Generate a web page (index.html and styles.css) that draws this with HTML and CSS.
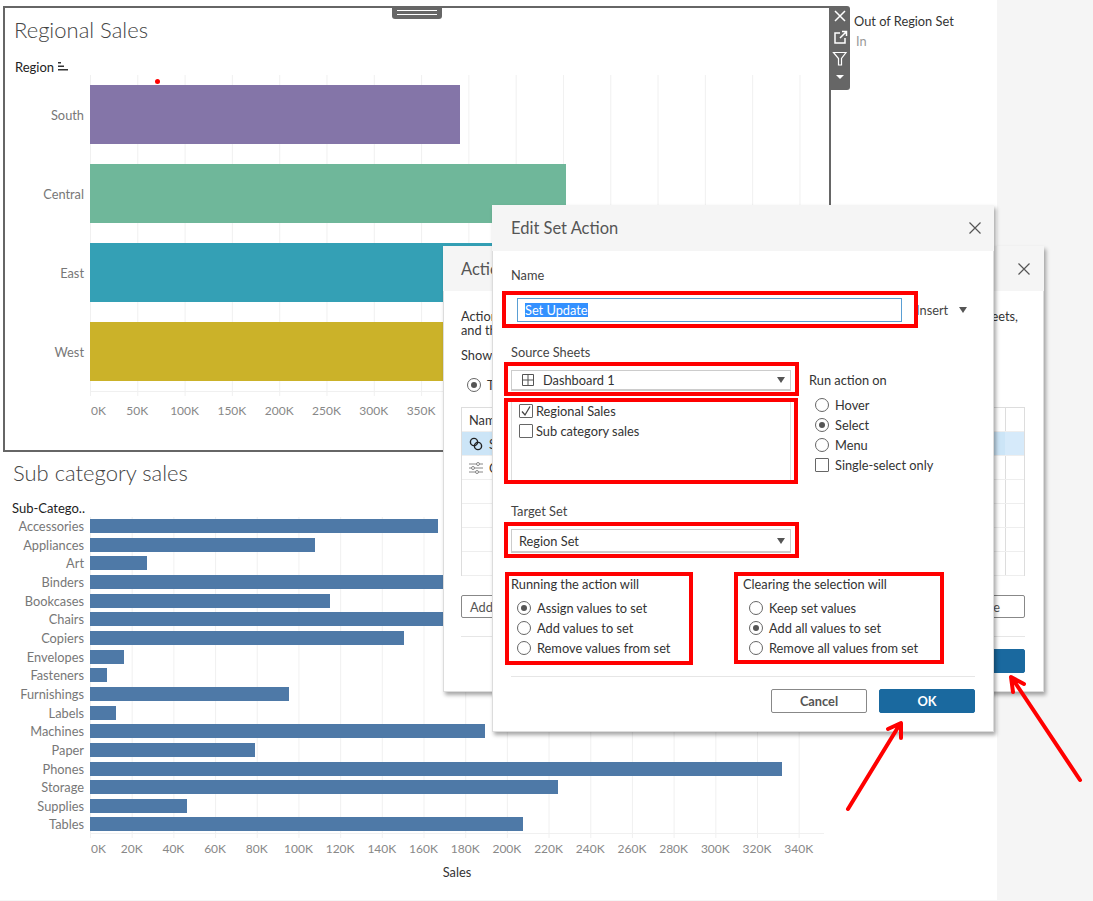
FILE: index.html
```html
<!DOCTYPE html>
<html lang="en">
<head>
<meta charset="utf-8">
<title>Edit Set Action</title>
<link rel="stylesheet" href="styles.css">
</head>
<body>
<main class="page">
  <div class="top-row">
    <section class="regional">
      <h2 class="view-title">Regional Sales</h2>
      <div class="field-head">Region
        <svg class="sort-icon" width="11" height="10" viewBox="0 0 11 10"><path d="M0 1h3v1.500H0zM0 4.500h6V6H0zM0 8h10v1.500H0z" fill="#333"/></svg>
      </div>
      <div class="big-row"><div class="row-label">South</div><div class="track track-big"><div class="big-bar south" style="width:370px"></div></div></div>
      <div class="big-row"><div class="row-label">Central</div><div class="track track-big"><div class="big-bar central" style="width:476px"></div></div></div>
      <div class="big-row"><div class="row-label">East</div><div class="track track-big"><div class="big-bar east" style="width:500px"></div></div></div>
      <div class="big-row"><div class="row-label">West</div><div class="track track-big"><div class="big-bar west" style="width:500px"></div></div></div>
      <div class="axis-block">
        <div class="ticks track-big"></div>
        <div class="axis-labels axis-big">
          <span>0K</span><span>50K</span><span>100K</span><span>150K</span><span>200K</span><span>250K</span><span>300K</span><span>350K</span>
        </div>
      </div>
      <span class="red-dot"></span>
      <div class="grip"><span></span><span></span></div>
      <div class="toolbar">
        <svg width="16" height="16" viewBox="0 0 16 16"><path d="M3 3l10 10M13 3L3 13" stroke="#fff" stroke-width="1.500" fill="none"/></svg>
        <svg width="16" height="16" viewBox="0 0 16 16"><path d="M8 4H3v10h10V9M8 9l6-6M10 2.500h4.500V7" stroke="#fff" stroke-width="1.500" fill="none"/></svg>
        <svg width="16" height="16" viewBox="0 0 16 16"><path d="M1.500 2.500h12.500L9.500 8.500V15h-3V8.500z" stroke="#fff" stroke-width="1.200" fill="none"/></svg>
        <svg width="16" height="12" viewBox="0 0 16 12"><path d="M4 4h8L8 8z" fill="#fff"/></svg>
      </div>
    </section>
    <aside class="legend">
      <div class="legend-title">Out of Region Set</div>
      <div class="legend-item">In</div>
    </aside>
  </div>

  <section class="subcat">
    <h2 class="view-title sub-title">Sub category sales</h2>
    <div class="field-head sub-head">Sub-Catego..</div>
    <div class="sub-rows">
      <div class="sub-row"><div class="row-label">Accessories</div><div class="track track-small"><div class="small-bar" style="width:348px"></div></div></div>
      <div class="sub-row"><div class="row-label">Appliances</div><div class="track track-small"><div class="small-bar" style="width:225px"></div></div></div>
      <div class="sub-row"><div class="row-label">Art</div><div class="track track-small"><div class="small-bar" style="width:57px"></div></div></div>
      <div class="sub-row"><div class="row-label">Binders</div><div class="track track-small"><div class="small-bar" style="width:424px"></div></div></div>
      <div class="sub-row"><div class="row-label">Bookcases</div><div class="track track-small"><div class="small-bar" style="width:240px"></div></div></div>
      <div class="sub-row"><div class="row-label">Chairs</div><div class="track track-small"><div class="small-bar" style="width:684px"></div></div></div>
      <div class="sub-row"><div class="row-label">Copiers</div><div class="track track-small"><div class="small-bar" style="width:314px"></div></div></div>
      <div class="sub-row"><div class="row-label">Envelopes</div><div class="track track-small"><div class="small-bar" style="width:34px"></div></div></div>
      <div class="sub-row"><div class="row-label">Fasteners</div><div class="track track-small"><div class="small-bar" style="width:17px"></div></div></div>
      <div class="sub-row"><div class="row-label">Furnishings</div><div class="track track-small"><div class="small-bar" style="width:199px"></div></div></div>
      <div class="sub-row"><div class="row-label">Labels</div><div class="track track-small"><div class="small-bar" style="width:26px"></div></div></div>
      <div class="sub-row"><div class="row-label">Machines</div><div class="track track-small"><div class="small-bar" style="width:395px"></div></div></div>
      <div class="sub-row"><div class="row-label">Paper</div><div class="track track-small"><div class="small-bar" style="width:165px"></div></div></div>
      <div class="sub-row"><div class="row-label">Phones</div><div class="track track-small"><div class="small-bar" style="width:692px"></div></div></div>
      <div class="sub-row"><div class="row-label">Storage</div><div class="track track-small"><div class="small-bar" style="width:468px"></div></div></div>
      <div class="sub-row"><div class="row-label">Supplies</div><div class="track track-small"><div class="small-bar" style="width:97px"></div></div></div>
      <div class="sub-row"><div class="row-label">Tables</div><div class="track track-small"><div class="small-bar" style="width:433px"></div></div></div>
    </div>
    <div class="axis-block sub-axis">
      <div class="ticks track-small"></div>
      <div class="axis-labels axis-small">
        <span>0K</span><span>20K</span><span>40K</span><span>60K</span><span>80K</span><span>100K</span><span>120K</span><span>140K</span><span>160K</span><span>180K</span><span>200K</span><span>220K</span><span>240K</span><span>260K</span><span>280K</span><span>300K</span><span>320K</span><span>340K</span>
      </div>
      <div class="axis-title">Sales</div>
    </div>
  </section>
</main>

<div class="dialog actions-dialog">
  <header class="dialog-head actions-head">
    <span>Actions</span>
    <svg class="close" width="14" height="14" viewBox="0 0 14 14"><path d="M1.500 1.500l11 11M12.500 1.500l-11 11" stroke="#555" stroke-width="1.200" fill="none"/></svg>
  </header>
  <div class="actions-body">
    <div class="intro"><span>Actions</span><span>sheets,</span></div>
    <div class="intro-2">and the</div>
    <div class="show-label">Show</div>
    <div class="option show-option"><span class="radio on"></span>T</div>
    <div class="action-table">
      <div class="t-row t-head"><div class="t-main">Name</div><div class="t-end"></div></div>
      <div class="t-row t-sel"><div class="t-main"><svg width="14" height="14" viewBox="0 0 14 14"><circle cx="5" cy="5" r="3.600" fill="none" stroke="#222" stroke-width="1.400"/><circle cx="9" cy="9" r="3.600" fill="none" stroke="#222" stroke-width="1.400"/></svg>S</div><div class="t-end"></div></div>
      <div class="t-row"><div class="t-main"><svg width="14" height="14" viewBox="0 0 14 14"><path d="M0 3h14M0 7h14M0 11h14" stroke="#888"/><circle cx="9" cy="3" r="1.500" fill="#fff" stroke="#888"/><circle cx="4" cy="7" r="1.500" fill="#fff" stroke="#888"/><circle cx="8" cy="11" r="1.500" fill="#fff" stroke="#888"/></svg>C</div><div class="t-end"></div></div>
      <div class="t-row"><div class="t-main"></div><div class="t-end"></div></div>
      <div class="t-row"><div class="t-main"></div><div class="t-end"></div></div>
      <div class="t-row"><div class="t-main"></div><div class="t-end"></div></div>
      <div class="t-row"><div class="t-main"></div><div class="t-end"></div></div>
    </div>
    <div class="table-btns"><button class="btn add-btn">Add</button><button class="btn remove-btn">Remove</button></div>
    <hr class="rule actions-rule">
    <div class="actions-foot"><button class="btn btn-blue">OK</button></div>
  </div>
</div>

<div class="dialog edit-dialog">
  <header class="dialog-head">
    <span>Edit Set Action</span>
    <svg class="close" width="14" height="14" viewBox="0 0 14 14"><path d="M1.500 1.500l11 11M12.500 1.500l-11 11" stroke="#555" stroke-width="1.200" fill="none"/></svg>
  </header>
  <div class="edit-body">
    <div class="label name-label">Name</div>
    <div class="name-row">
      <div class="name-input"><span class="selected">Set Update</span></div>
      <span class="insert">Insert</span><span class="caret insert-caret"></span>
    </div>
    <div class="label source-label">Source Sheets</div>
    <div class="source-cols">
      <div class="source-left">
        <div class="select">
          <svg class="grid-icon" width="12" height="12" viewBox="0 0 12 12"><path d="M.5.500h11v11H.500zM6 .500v11M.5 6h11" fill="none" stroke="#555"/></svg>
          <span>Dashboard 1</span><span class="caret"></span>
        </div>
        <div class="sheet-list">
          <div class="sheet-item"><span class="check"><svg width="12" height="12" viewBox="0 0 12 12"><path d="M2 6.500l3 3.500 5-8.500" fill="none" stroke="#444" stroke-width="1.300"/></svg></span>Regional Sales</div>
          <div class="sheet-item"><span class="check"></span>Sub category sales</div>
        </div>
      </div>
      <div class="run-on">
        <div class="run-title">Run action on</div>
        <div class="options run-options">
          <div class="option"><span class="radio"></span>Hover</div>
          <div class="option"><span class="radio on"></span>Select</div>
          <div class="option"><span class="radio"></span>Menu</div>
          <div class="option"><span class="check"></span>Single-select only</div>
        </div>
      </div>
    </div>
    <div class="label target-label">Target Set</div>
    <div class="select target-select"><span>Region Set</span><span class="caret"></span></div>
    <div class="groups">
      <div>
        <div class="group-title">Running the action will</div>
        <div class="options">
          <div class="option"><span class="radio on"></span>Assign values to set</div>
          <div class="option"><span class="radio"></span>Add values to set</div>
          <div class="option"><span class="radio"></span>Remove values from set</div>
        </div>
      </div>
      <div>
        <div class="group-title">Clearing the selection will</div>
        <div class="options">
          <div class="option"><span class="radio"></span>Keep set values</div>
          <div class="option"><span class="radio on"></span>Add all values to set</div>
          <div class="option"><span class="radio"></span>Remove all values from set</div>
        </div>
      </div>
    </div>
    <hr class="rule edit-rule">
    <div class="edit-foot">
      <button class="btn btn-cancel">Cancel</button>
      <button class="btn btn-blue btn-ok">OK</button>
    </div>
  </div>
  <div class="mark mark-name"></div>
  <div class="mark mark-source"></div>
  <div class="mark mark-list"></div>
  <div class="mark mark-target"></div>
  <div class="mark mark-run"></div>
  <div class="mark mark-clear"></div>
</div>

<svg class="arrows" width="1093" height="901" viewBox="0 0 1093 901">
  <path d="M848 809L900 724M888 729L901 723L901 738" fill="none" stroke="#f00" stroke-width="4" stroke-linecap="round" stroke-linejoin="round"/>
  <path d="M1080 780L1012 678M1024 684L1011 677L1013 692" fill="none" stroke="#f00" stroke-width="4" stroke-linecap="round" stroke-linejoin="round"/>
</svg>
</body>
</html>
```
FILE: styles.css
```css
* { box-sizing: border-box; }
html, body { margin: 0; padding: 0; }
body {
  width: 1093px;
  height: 901px;
  overflow: hidden;
  position: relative;
  background: #f5f5f5;
  font-family: Lato, "Open Sans", sans-serif;
  font-size: 12.8px;
  color: #333;
}
.page { width: 997px; height: 900px; background: #fff; padding-top: 6px; }
.top-row { display: flex; }
.regional {
  position: relative;
  width: 828px;
  height: 446px;
  margin-left: 3px;
  border: 2px solid #666;
  padding: 10px 0 0 0;
}
.view-title {
  margin: 0 0 0 9px;
  font-weight: 300;
  font-size: 22px;
  line-height: 24px;
  color: #444;
}
.field-head {
  margin: 17px 0 0 10px;
  height: 16px;
  line-height: 16px;
  font-size: 13px;
  color: #222;
  display: flex;
  align-items: center;
  gap: 4px;
}
.sort-icon { margin-top: -3px; }
.big-row { display: flex; height: 79px; padding-right: 5px; }
.row-label {
  width: 85px;
  padding-right: 6px;
  text-align: right;
  color: #777;
  align-self: center;
}
.track { flex: 1; display: flex; align-items: center; }
.track-big { background: linear-gradient(90deg, #f0f0f0 1px, transparent 1px) 0 0 / 47.3px 100%; }
.big-bar { height: 59px; }
.south { background: #8475a8; }
.central { background: #6fb79a; }
.east { background: #34a0b5; }
.west { background: #cbb229; }
.axis-block { padding-left: 85px; padding-right: 5px; }
.ticks { height: 5px; border-top: 1px solid #f0f0f0; }
.axis-labels { display: flex; color: #888; font-size: 12px; line-height: 16px; margin-top: 7px; }
.axis-big span { width: 47.3px; text-align: center; flex: none; }
.axis-big span:first-child { width: 23.65px; text-align: left; padding-left: 1px; }
.red-dot {
  position: absolute;
  left: 150px;
  top: 71px;
  width: 5px;
  height: 5px;
  border-radius: 50%;
  background: #f00;
}
.grip {
  position: absolute;
  left: 387px;
  top: -2px;
  width: 50px;
  height: 13px;
  background: #666;
  border-radius: 0 0 3px 3px;
  padding-top: 4px;
  display: flex;
  flex-direction: column;
  align-items: center;
  gap: 3px;
}
.grip span { display: block; width: 40px; height: 1px; background: #fff; }
.toolbar {
  position: absolute;
  left: 825px;
  top: -2px;
  width: 20px;
  height: 84px;
  background: #666;
  border-radius: 0 3px 3px 0;
  display: flex;
  flex-direction: column;
  align-items: center;
  padding-top: 2px;
  gap: 5px;
}
.legend { margin-left: 23px; padding-top: 7px; }
.legend-title { line-height: 16px; color: #333; }
.legend-item { margin: 4px 0 0 2px; line-height: 16px; color: #999; }

.sub-title { margin: 9px 0 0 13px; }
.sub-head { margin: 15px 0 0 12px; }
.sub-rows { padding-top: .67px; padding-right: 173px; }
.sub-row { display: flex; height: 18.67px; }
.sub-row .row-label { width: 90px; line-height: 16px; }
.track-small { background: linear-gradient(90deg, #f0f0f0 1px, transparent 1px) 0 0 / 41.7px 100%; }
.small-bar { height: 14px; background: #4e79a7; }
.sub-axis { padding-left: 90px; padding-right: 173px; margin-top: -1px; }
.axis-small span { width: 41.7px; text-align: center; flex: none; }
.axis-small span:first-child { width: 20.85px; text-align: left; padding-left: 1px; }
.axis-small { margin-top: 3px; }
.axis-title { width: 734px; text-align: center; line-height: 16px; margin-top: 7px; color: #333; }

.dialog {
  position: absolute;
  background: #fff;
  box-shadow: inset 0 0 0 1px #dcdcdc, 2px 3px 4px rgba(0, 0, 0, .35);
}
.dialog-head {
  height: 46px;
  background: #f5f5f5;
  display: flex;
  align-items: center;
  justify-content: space-between;
  padding: 0 12px 0 19px;
  font-size: 16.500px;
  color: #555;
}
.edit-dialog { left: 492px; top: 205px; width: 502px; height: 527px; }
.actions-dialog { left: 443px; top: 246px; width: 601px; height: 446px; }
.actions-head { height: 45px; padding: 0 13px 0 18px; }
.actions-body { padding: 0 19px 0 18px; }
.intro { display: flex; justify-content: space-between; margin-top: 18px; line-height: 14px; padding-right: 7px; }
.intro-2 { line-height: 14px; }
.show-label { margin-top: 10px; line-height: 16px; }
.option.show-option { margin: 15px 0 0 6px; height: 14px; }
.action-table { margin-top: 15px; border: 1px solid #ddd; height: 169px; }
.t-row { display: flex; height: 24px; border-bottom: 1px solid #eee; }
.t-main { flex: 1; display: flex; align-items: center; gap: 6px; padding-left: 7px; overflow: hidden; }
.t-end { width: 19px; border-left: 1px solid #ddd; }
.t-sel { background: #cce5f7; }
.t-sel .t-end { background: #d6eafa; border-left: none; }
.table-btns { display: flex; justify-content: space-between; margin-top: 19px; }
.btn {
  font: inherit;
  height: 24px;
  background: #fff;
  border: 1px solid #888;
  border-radius: 2px;
  color: #555;
  padding: 0;
}
.add-btn { width: 90px; text-align: left; padding-left: 8px; height: 23px; }
.remove-btn { width: 90px; text-align: right; padding-right: 24px; height: 23px; }
.rule { border: none; border-top: 1px solid #e6e6e6; margin: 0; }
.actions-rule { margin-top: 18px; }
.actions-foot { display: flex; justify-content: flex-end; margin-top: 12px; }
.btn-blue { width: 96px; background: #1a699f; border-color: #1a699f; color: #fff; font-weight: 700; }

.edit-body { padding: 0 19px; }
.label { line-height: 16px; color: #444; }
.name-label { margin-top: 16px; }
.name-row { display: flex; align-items: center; height: 24px; margin: 15px 0 0 6px; }
.name-input {
  width: 385px;
  height: 24px;
  border: 1px solid #5a9fd4;
  padding-left: 7px;
  display: flex;
  align-items: center;
}
.selected { background: #3390ff; color: #fff; line-height: 14px; }
.insert { margin-left: 14px; color: #444; }
.caret { width: 0; height: 0; border: 4px solid transparent; border-top: 6px solid #555; border-bottom: none; }
.insert-caret { margin-left: 11px; }
.source-label { margin-top: 22px; }
.source-cols { display: flex; margin-top: 10px; }
.source-left { width: 280px; }
.select {
  height: 21px;
  border: 1px solid #ccc;
  border-bottom-width: 2px;
  display: flex;
  align-items: center;
  padding: 0 5px 0 10px;
  color: #333;
}
.select .caret { margin-left: auto; }
.grid-icon { margin-right: 9px; }
.sheet-list { margin-top: 8px; height: 81px; padding: 2px 0 0 7px; border: 1px solid #ddd; border-width: 0 1px; }
.sheet-item { display: flex; align-items: center; gap: 3px; height: 20px; }
.check { width: 14px; height: 14px; border: 1px solid #666; border-radius: 1px; flex: none; display: flex; }
.run-on { margin-left: 18px; }
.run-title { padding-top: 2px; line-height: 16px; height: 19px; }
.run-options { margin: 6px 0 0 6px; }
.option { display: flex; align-items: center; gap: 6px; height: 20px; }
.radio {
  width: 14px;
  height: 14px;
  border: 1px solid #666;
  border-radius: 50%;
  flex: none;
  display: flex;
  align-items: center;
  justify-content: center;
}
.radio.on::after { content: ""; width: 6px; height: 6px; border-radius: 50%; background: #555; }
.target-label { margin-top: 23px; }
.target-select { margin-top: 10px; height: 24px; width: 280px; padding-left: 7px; }
.groups { display: grid; grid-template-columns: 232px 1fr; margin-top: 23px; }
.group-title { line-height: 16px; }
.groups .options { margin: 6px 0 0 6px; }
.edit-rule { margin-top: 18px; }
.edit-foot { display: flex; justify-content: flex-end; gap: 12px; margin-top: 12px; }
.btn-cancel { width: 96px; font-weight: 700; }
.mark { position: absolute; border: 4px solid #f00; }
.mark-name { left: 10px; top: 86px; width: 416px; height: 37px; }
.mark-source { left: 12px; top: 157px; width: 295px; height: 34px; }
.mark-list { left: 12px; top: 193px; width: 294px; height: 86px; }
.mark-target { left: 12px; top: 317px; width: 295px; height: 36px; }
.mark-run { left: 13px; top: 367px; width: 188px; height: 93px; }
.mark-clear { left: 242px; top: 367px; width: 210px; height: 92px; }
.arrows { position: absolute; left: 0; top: 0; pointer-events: none; }
```
